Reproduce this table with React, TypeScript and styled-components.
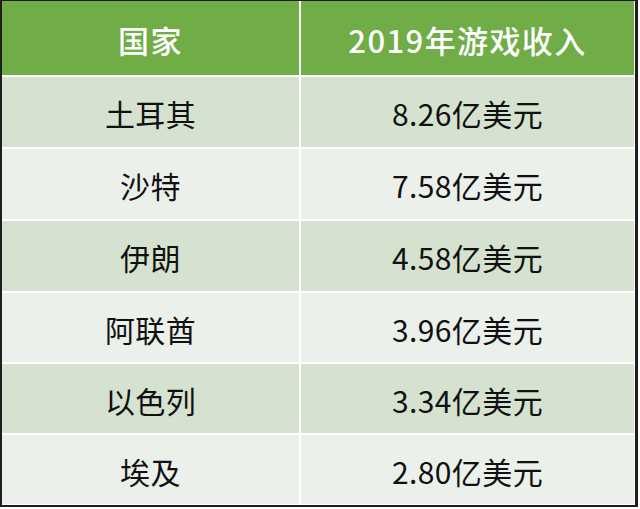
import React from "react";
import styled, { createGlobalStyle } from "styled-components";

const GlobalStyle = createGlobalStyle`
  html, body { margin: 0; padding: 0; background: #ffffff; }
  body { font-family: "Noto Sans CJK SC", "Noto Sans", sans-serif; }
`;

const Frame = styled.div`
  width: 632px;
  height: 503px;
  border-style: solid;
  border-color: #1e1e1e;
  border-width: 1px 3px 2px 2px;
  background: #ffffff;
  display: grid;
  grid-template-columns: 297px 1fr;
  grid-template-rows: 74px repeat(3, 70px) repeat(3, 69px);
  column-gap: 2px;
  row-gap: 2px;
  padding-right: 1px;
  padding-bottom: 1px;
  box-sizing: content-box;
`;

const Cell = styled.div<{ $tone: "head" | "dark" | "light" }>`
  display: flex;
  align-items: center;
  justify-content: center;
  font-size: ${(p) => (p.$tone === "head" ? "31px" : "30px")};
  font-weight: ${(p) => (p.$tone === "head" ? 500 : 400)};
  line-height: 1;
  letter-spacing: ${(p) => (p.$tone === "head" ? "1.4px" : "0.4px")};
  color: ${(p) => (p.$tone === "head" ? "#ffffff" : "#111111")};
  background: ${(p) =>
    p.$tone === "head" ? "#70ad47" : p.$tone === "dark" ? "#d6e2d0" : "#ebf0ea"};
  padding-top: ${(p) => (p.$tone === "head" ? "3px" : "2px")};
  box-sizing: border-box;
`;

const rows: [string, string][] = [
  ["土耳其", "8.26亿美元"],
  ["沙特", "7.58亿美元"],
  ["伊朗", "4.58亿美元"],
  ["阿联酋", "3.96亿美元"],
  ["以色列", "3.34亿美元"],
  ["埃及", "2.80亿美元"],
];

export default function App() {
  return (
    <>
      <GlobalStyle />
      <Frame>
        <Cell $tone="head">国家</Cell>
        <Cell $tone="head">2019年游戏收入</Cell>
        {rows.map(([c, v], i) => (
          <React.Fragment key={c}>
            <Cell $tone={i % 2 === 0 ? "dark" : "light"}>{c}</Cell>
            <Cell $tone={i % 2 === 0 ? "dark" : "light"}>{v}</Cell>
          </React.Fragment>
        ))}
      </Frame>
    </>
  );
}
